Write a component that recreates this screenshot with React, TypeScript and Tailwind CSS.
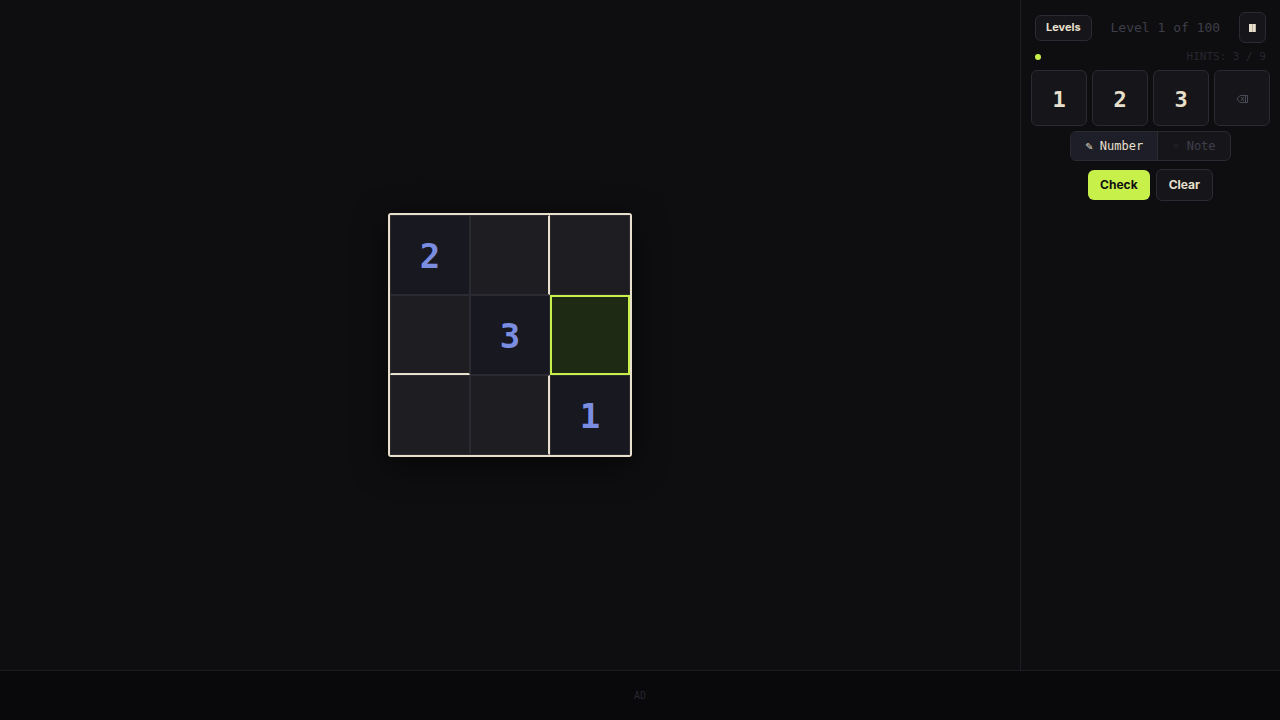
import React, { useState } from "react";
import clsx from "clsx";

type Cell = {
  given?: number;
  wallRight?: boolean;
  wallBottom?: boolean;
};

const cells: Cell[] = [
  { given: 2 }, { wallRight: true }, {},
  { wallBottom: true }, { given: 3 }, {},
  {}, { wallRight: true }, { given: 1 },
];

const digits = [1, 2, 3];

const App: React.FC = () => {
  const [selected, setSelected] = useState(5);
  const [entries, setEntries] = useState<Record<number, number>>({});
  const [mode, setMode] = useState<"number" | "note">("number");

  const enter = (n: number) => {
    if (!cells[selected].given) setEntries({ ...entries, [selected]: n });
  };

  const erase = () => {
    const next = { ...entries };
    delete next[selected];
    setEntries(next);
  };

  const key = "flex-1 h-14 pt-0.5 rounded-md border border-[#2a2a32] bg-[#16161a]";

  return (
    <div className="min-h-screen flex flex-col bg-[#0e0e10] text-[#e8e0cc] font-['DejaVu_Sans_Mono',monospace]">
      <div className="flex-1 flex">
        <main className="flex-1 flex items-center justify-center">
          <div className="grid grid-cols-3 rounded-[3px] border-2 border-[#e8e0cc] bg-[#1e1e22] shadow-[0_8px_32px_rgba(0,0,0,0.6)]">
            {cells.map((c, i) => (
              <button
                key={i}
                aria-label={`Cell ${i + 1}`}
                onClick={() => setSelected(i)}
                className={clsx(
                  "size-20 pt-0.5 border text-[34px] leading-none font-bold",
                  c.given ? "text-[#7b8de0]" : "text-[#e8e0cc]",
                  i === selected
                    ? "border-2 border-[#c8f04a] bg-[#1f2a14]"
                    : ["border-[#2a2a30]", c.given ? "bg-[#181820]" : "bg-[#1e1e22]"],
                  i !== selected && c.wallRight && "border-r-2 border-r-[#e8e0cc]",
                  i !== selected && c.wallBottom && "border-b-2 border-b-[#e8e0cc]"
                )}
              >
                {c.given ?? entries[i]}
              </button>
            ))}
          </div>
        </main>

        <aside className="w-[260px] border-l border-[#1c1c22] px-2.5 pt-3">
          <header className="flex items-center justify-between px-1">
            <button className="h-[26px] px-2.5 rounded-md border border-[#2a2a32] bg-[#16161a] font-['Inter',sans-serif] text-[11px] font-bold">
              Levels
            </button>
            <span className="text-[13px] text-[#3e3e4a]">Level 1 of 100</span>
            <button aria-label="Pause" className="w-[27px] h-[31px] flex items-center justify-center rounded-md border border-[#2a2a32] bg-[#16161a]">
              <svg width="7" height="8" viewBox="0 0 7 8" fill="currentColor">
                <rect width="7" height="8" opacity="0.8" />
                <rect width="3" height="8" />
                <rect x="4" width="2" height="8" />
              </svg>
            </button>
          </header>

          <div className="flex items-center justify-between px-1 mt-1.5 h-4">
            <span className="size-1.5 rounded-full bg-[#c8f04a]" />
            <span className="text-[11px] text-[#26262e]">HINTS: 3 / 9</span>
          </div>

          <div className="flex gap-[5px] mt-[5px]">
            {digits.map((n) => (
              <button key={n} onClick={() => enter(n)} className={clsx(key, "text-[22px] font-bold")}>
                {n}
              </button>
            ))}
            <button aria-label="Erase" onClick={erase} className={clsx(key, "flex items-center justify-center text-[#4a4a56]")}>
              <svg width="12" height="8" viewBox="0 0 12 8" fill="none" stroke="currentColor">
                <path d="M4 .5H11.5V7.5H4L1 4ZM5 2l3 4M8 2L5 6M9.5 1v6" />
              </svg>
            </button>
          </div>

          <div className="flex justify-center mt-[5px]">
            <div className="flex h-[30px] overflow-hidden rounded-md border border-[#2a2a32] bg-[#16161a] text-xs">
              <button
                onClick={() => setMode("number")}
                className={clsx("px-3.5 border-r border-[#2a2a32]", mode === "number" ? "bg-[#1e1e28]" : "text-[#3e3e4a]")}
              >
                ✎ Number
              </button>
              <button
                onClick={() => setMode("note")}
                className={clsx("px-3.5", mode === "note" ? "bg-[#1e1e28]" : "text-[#3e3e4a]")}
              >
                ◦ Note
              </button>
            </div>
          </div>

          <div className="flex items-center justify-center gap-1.5 mt-2 font-['Inter',sans-serif] text-xs font-bold">
            <button className="h-[30px] px-3 rounded-md bg-[#c8f04a] text-[#0e0e10]">Check</button>
            <button onClick={() => setEntries({})} className="h-8 px-3 rounded-md border border-[#2a2a32] bg-[#16161a]">
              Clear
            </button>
          </div>
        </aside>
      </div>

      <footer className="h-[50px] flex items-center justify-center border-t border-[#1c1c22] bg-[#09090b] text-[10px] text-[#26262e]">
        AD
      </footer>
    </div>
  );
};

export default App;
